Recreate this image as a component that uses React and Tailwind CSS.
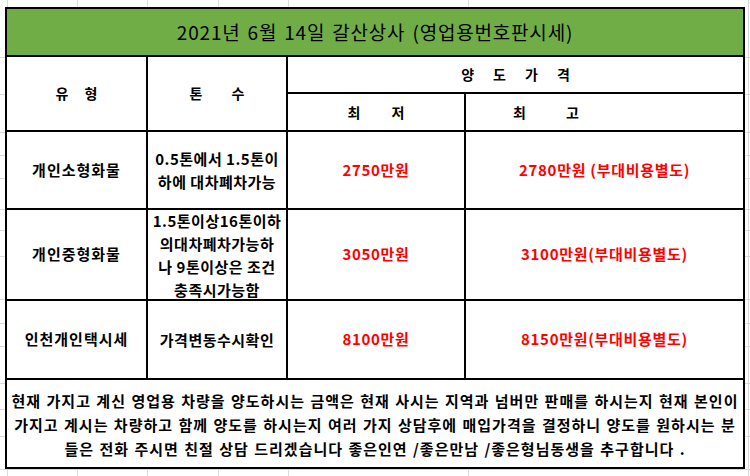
import React from 'react'

const rows = [
  {
    type: '개인소형화물',
    ton: ['0.5톤에서 1.5톤이', '하에 대차폐차가능'],
    low: '2750만원',
    high: '2780만원 (부대비용별도)',
  },
  {
    type: '개인중형화물',
    ton: ['1.5톤이상16톤이하', '의대차폐차가능하', '나 9톤이상은 조건', '충족시가능함'],
    low: '3050만원',
    high: '3100만원(부대비용별도)',
  },
  {
    type: '인천개인택시세',
    ton: ['가격변동수시확인'],
    low: '8100만원',
    high: '8150만원(부대비용별도)',
  },
]

const rowHeights = ['h-[76px]', 'h-[89px]', 'h-[77px]']

function Spaced({ chars, gap }) {
  return (
    <div className={`flex ${gap}`}>
      {chars.map((c, i) => (
        <span key={i}>{c}</span>
      ))}
    </div>
  )
}

export default function App() {
  return (
    <div className="w-[750px] h-[476px] bg-white overflow-hidden font-['Noto_Sans_CJK_KR','Malgun_Gothic',sans-serif] text-black bg-[image:linear-gradient(to_right,transparent_7px,#dadada_7px_8px,transparent_8px_77px,#dadada_77px_78px,transparent_78px_147px,#dadada_147px_148px,transparent_148px_218px,#dadada_218px_219px,transparent_219px_288px,#dadada_288px_289px,transparent_289px_468px,#dadada_468px_469px,transparent_469px_748px,#dadada_748px_749px,transparent_749px),linear-gradient(to_bottom,transparent_57px,#dadada_57px_58px,transparent_58px_94px,#dadada_94px_95px,transparent_95px_132px,#dadada_132px_133px,transparent_133px_155px,#dadada_155px_156px,transparent_156px_178px,#dadada_178px_179px,transparent_179px_209px,#dadada_209px_210px,transparent_210px_230px,#dadada_230px_231px,transparent_231px_256px,#dadada_256px_257px,transparent_257px_299px,#dadada_299px_300px,transparent_300px_323px,#dadada_323px_324px,transparent_324px_346px,#dadada_346px_347px,transparent_347px_383px,#dadada_383px_384px,transparent_384px_409px,#dadada_409px_410px,transparent_410px_436px,#dadada_436px_437px,transparent_437px_469px,#dadada_469px_470px,transparent_470px)]">
      <div className="ml-[5px] mt-[7px] w-[740px] bg-black p-[2px]">
        <div className="grid grid-cols-[139px_138px_176px_277px] gap-[2px]">
          {/* 제목 */}
          <div className="col-span-4 h-[46px] bg-[#70AD47] flex items-center justify-center text-[19px] tracking-[0.8px] [word-spacing:2px] pt-[1px]">
            2021년 6월 14일 갈산상사 (영업용번호판시세)
          </div>

          {/* 헤더 */}
          <div className="row-span-2 bg-white flex items-center justify-center text-[14px] font-bold">
            <Spaced chars={['유', '형']} gap="gap-[16px]" />
          </div>
          <div className="row-span-2 bg-white flex items-center justify-center text-[14px] font-bold">
            <Spaced chars={['톤', '수']} gap="gap-[29px]" />
          </div>
          <div className="col-span-2 h-[35px] bg-white flex items-center justify-center text-[14px] font-bold">
            <Spaced chars={['양', '도', '가', '격']} gap="gap-[19px]" />
          </div>
          <div className="h-[36px] bg-white flex items-center justify-center text-[14px] font-bold">
            <Spaced chars={['최', '저']} gap="gap-[31px]" />
          </div>
          <div className="h-[36px] bg-white flex items-center pl-[47px] text-[14px] font-bold">
            <Spaced chars={['최', '고']} gap="gap-[40px]" />
          </div>

          {/* 데이터 */}
          {rows.map((r, i) => (
            <React.Fragment key={i}>
              <div className={`${rowHeights[i]} bg-white flex items-center justify-center text-[15px] tracking-[1px] font-bold`}>
                {r.type}
              </div>
              <div className={`${rowHeights[i]} bg-white flex flex-col items-center justify-center text-[15px] tracking-[0.5px] font-bold leading-[23px] whitespace-nowrap`}>
                {r.ton.map((t, j) => (
                  <span key={j}>{t}</span>
                ))}
              </div>
              <div className={`${rowHeights[i]} bg-white flex items-center justify-center text-[15px] tracking-[0.7px] font-bold text-[#ff0000]`}>
                {r.low}
              </div>
              <div className={`${rowHeights[i]} bg-white flex items-center justify-center text-[15px] tracking-[0.7px] font-bold text-[#ff0000]`}>
                {r.high}
              </div>
            </React.Fragment>
          ))}

          {/* 안내문 */}
          <div className="col-span-4 h-[87px] bg-white flex flex-col items-center justify-center pt-[3px] text-[15px] tracking-[1px] [word-spacing:1px] font-bold leading-[24px] whitespace-nowrap">
            <span>현재 가지고 계신 영업용 차량을 양도하시는 금액은 현재 사시는 지역과 넘버만 판매를 하시는지 현재 본인이</span>
            <span>가지고 계시는 차량하고 함께 양도를 하시는지 여러 가지 상담후에 매입가격을 결정하니 양도를 원하시는 분</span>
            <span>들은 전화 주시면 친절 상담 드리겠습니다 좋은인연 /좋은만남 /좋은형님동생을 추구합니다 .</span>
          </div>
        </div>
      </div>
    </div>
  )
}
